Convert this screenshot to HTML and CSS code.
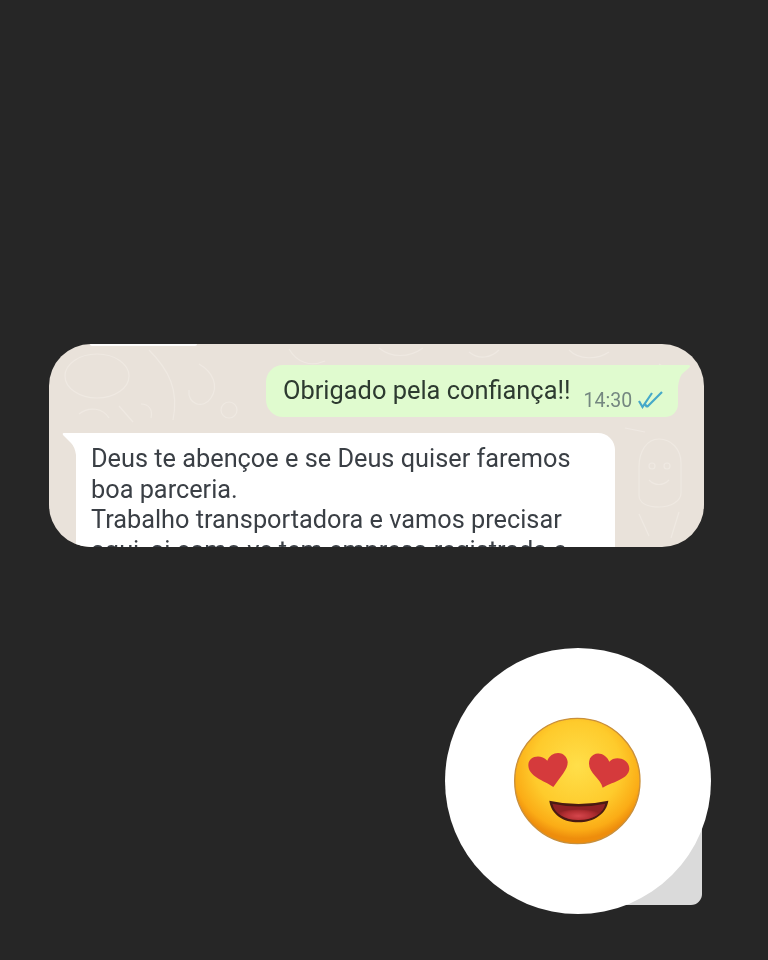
FILE: index.html
```html
<!DOCTYPE html>
<html lang="pt">
<head>
<meta charset="utf-8">
<title>Obrigado pela confiança</title>
<link rel="stylesheet" href="styles.css">
</head>
<body>
<main class="page">
  <section class="chat">
    <svg class="doodles" viewBox="0 0 655 203" aria-hidden="true">
      <g fill="none" stroke="#efe9e2" stroke-width="1.2">
        <ellipse cx="48" cy="32" rx="32" ry="22"/>
        <path d="M100 6c20 20 30 40 24 70M150 20c14 8 20 22 12 34s-24 6-22-8"/>
        <path d="M30 70c10-8 24-6 30 4M70 62l14 16M92 60c8 0 12 6 10 14"/>
        <circle cx="180" cy="66" r="8"/>
        <path d="M240 5c8 14 22 18 36 12M330 4c12 10 30 10 44 0M420 8c10 8 22 6 30-2M520 6c10 10 28 10 40 2"/>
        <path d="M610 95c-12 0-20 12-20 28v28c0 8 8 12 20 12s22-6 22-14v-30c0-14-10-24-22-24z"/>
        <circle cx="603" cy="122" r="3"/>
        <circle cx="618" cy="122" r="3"/>
        <path d="M600 136c6 6 14 6 20 0M590 170l10 22M630 168l-8 26"/>
        <path d="M610 20c12 6 20 20 18 34M576 84l20 4"/>
      </g>
    </svg>
    <div class="sliver"></div>
    <div class="row-out">
      <div class="bubble-out">
        <span class="out-text">Obrigado pela confiança!!</span>
        <span class="meta">
          <span class="time">14:30</span>
          <svg class="ticks" viewBox="0 0 26 18" aria-hidden="true">
            <path d="M1 10l3.500 6L14 2M9 16L24 1M6.500 12.500L9 16" fill="none" stroke="#46a9c9" stroke-width="2.200"/>
          </svg>
        </span>
        <svg class="tail-out" viewBox="0 0 14 22" aria-hidden="true">
          <path d="M0 0H10.500Q13 .5 11.500 2.500L4 9Q1 13 0 22Z" fill="#e0fbcf"/>
        </svg>
      </div>
    </div>
    <div class="bubble-in">
      <svg class="tail-in" viewBox="0 0 14 22" aria-hidden="true">
        <path d="M14 0H1.500Q0 .5 1 2L9 10Q13 14 14 22Z" fill="#fff"/>
      </svg>
      <p class="in-text">Deus te abençoe e se Deus quiser faremos<br>boa parceria.<br>Trabalho transportadora e vamos precisar<br>aqui, ai como vc tem empresa registrada e</p>
    </div>
  </section>

  <section class="reaction">
    <div class="reaction-tab"></div>
    <div class="reaction-circle">
      <svg class="emoji" viewBox="39 33 390 390" role="img" aria-label="Rosto com olhos de coração">
        <defs>
          <radialGradient id="face" cx="50%" cy="38%" r="58%">
            <stop offset="0" stop-color="#ffdf4a"/>
            <stop offset=".6" stop-color="#fecb2c"/>
            <stop offset=".88" stop-color="#fbac16"/>
            <stop offset="1" stop-color="#ee8d0c"/>
          </radialGradient>
          <radialGradient id="mouth" gradientUnits="userSpaceOnUse" cx="235" cy="332" r="70" gradientTransform="translate(0 220) scale(1 .34)">
            <stop offset="0" stop-color="#d5464c"/>
            <stop offset=".6" stop-color="#b42f33"/>
            <stop offset="1" stop-color="#8c1f22"/>
          </radialGradient>
        </defs>
        <circle cx="232" cy="228" r="188" fill="url(#face)" stroke="#c98f3a" stroke-width="4"/>
        <path d="M160 246C130 225 85 215 85 180C85 155 120 145 142 167C150 145 180 135 197 155C215 180 190 205 160 246Z" fill="#d53a3c"/>
        <path d="M308 248C300 215 255 200 270 160C285 135 318 145 328 170C345 150 388 160 388 192C385 222 345 228 308 248Z" fill="#d53a3c"/>
        <path d="M148 287Q235 307 325 287C320 325 282 352 235 352C190 352 153 328 148 287Z" fill="#4a1a12"/>
        <path d="M157 296Q235 313 316 296C310 325 278 345 235 345C195 345 163 325 157 296Z" fill="#8f2124"/>
        <path d="M172 322Q235 305 302 322C285 338 262 345 235 345C210 345 188 338 172 322Z" fill="url(#mouth)"/>
      </svg>
    </div>
  </section>
</main>
</body>
</html>
```

FILE: styles.css
```css
html, body {
  margin: 0;
  padding: 0;
  background: #262626;
}

.page {
  width: 768px;
  height: 960px;
  box-sizing: border-box;
  padding-top: 344px;
  overflow: hidden;
  font-family: Roboto, "Liberation Sans", sans-serif;
}

.chat {
  position: relative;
  width: 655px;
  height: 203px;
  margin-left: 49px;
  border-radius: 42px;
  background: #e9e2da;
  overflow: hidden;
  filter: blur(0.5px);
}

.doodles {
  position: absolute;
  inset: 0;
  width: 100%;
  height: 100%;
}

.sliver {
  position: relative;
  width: 107px;
  height: 2px;
  margin-left: 41px;
  border-radius: 0 0 8px 8px;
  background: #fdfcfb;
}

.row-out {
  position: relative;
  display: flex;
  justify-content: flex-end;
  margin-top: 19px;
  padding-right: 26px;
}

.bubble-out {
  position: relative;
  display: flex;
  align-items: center;
  box-sizing: border-box;
  width: 412px;
  height: 52px;
  padding-left: 17px;
  border-radius: 17px 0 13px 17px;
  background: #e0fbcf;
}

.out-text {
  position: relative;
  top: -1px;
  font-size: 25.400px;
  color: #2d3a30;
  white-space: nowrap;
}

.meta {
  position: relative;
  top: 9px;
  display: flex;
  align-items: center;
  gap: 6px;
  margin-left: 13px;
}

.time {
  font-size: 19.500px;
  color: #748780;
}

.ticks {
  width: 26px;
  height: 18px;
}

.tail-out {
  position: absolute;
  top: 0;
  left: 100%;
  width: 14px;
  height: 22px;
}

.bubble-in {
  position: relative;
  box-sizing: border-box;
  width: 539px;
  height: 140px;
  margin-top: 16px;
  margin-left: 27px;
  padding: 11px 15px 0;
  border-radius: 0 17px 0 0;
  background: #fff;
}

.tail-in {
  position: absolute;
  top: 0;
  right: 100%;
  width: 14px;
  height: 22px;
}

.in-text {
  margin: 0;
  font-size: 25.300px;
  line-height: 30.500px;
  color: #3a3f45;
  white-space: nowrap;
}

.reaction {
  position: relative;
  width: 266px;
  height: 266px;
  margin-top: 101px;
  margin-left: 445px;
}

.reaction-tab {
  position: absolute;
  right: 9px;
  bottom: 9px;
  width: 90px;
  height: 90px;
  border-radius: 0 0 11px 0;
  background: #dadada;
}

.reaction-circle {
  position: relative;
  display: flex;
  align-items: center;
  justify-content: center;
  width: 266px;
  height: 266px;
  border-radius: 50%;
  background: #fff;
}

.emoji {
  width: 130px;
  height: 130px;
  overflow: visible;
  filter: blur(0.7px);
}
```
